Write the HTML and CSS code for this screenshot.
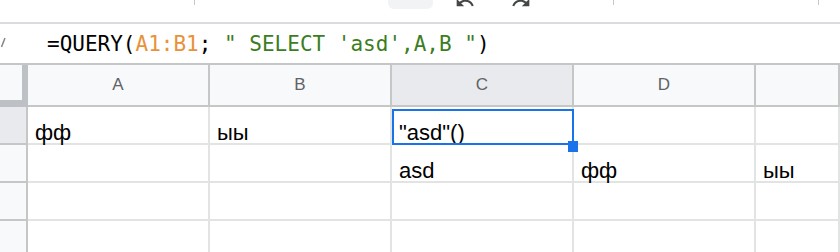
FILE: index.html
```html
<!DOCTYPE html>
<html lang="ru">

<head>
  <meta charset="UTF-8">
  <meta name="viewport" content="width=device-width, initial-scale=1.0">
  <title>Таблица</title>
  <link rel="stylesheet" href="styles.css">
</head>

<body>
  <div class="toolbar">
    <span class="sep sep-first"></span>
    <span class="pill"></span>
    <svg class="ico undo" viewBox="0 0 24 24"><path d="M12.5 8c-2.65 0-5.05.99-6.9 2.6L2 7v9h9l-3.62-3.62c1.39-1.16 3.16-1.88 5.12-1.88 3.54 0 6.55 2.31 7.6 5.5l2.37-.78C21.08 11.030 17.15 8 12.5 8z"/></svg>
    <svg class="ico redo" viewBox="0 0 24 24"><path d="M18.4 10.6C16.55 8.99 14.15 8 11.5 8c-4.65 0-8.58 3.03-9.96 7.22L3.9 16c1.05-3.19 4.05-5.5 7.6-5.5 1.95 0 3.73.72 5.12 1.880L13 16h9V7l-3.6 3.6z"/></svg>
    <span class="sep sep-second"></span>
    <span class="sep sep-third"></span>
  </div>

  <div class="formula-bar">
    <svg class="fx" viewBox="0 0 6 12"><path d="M5 2 L1.5 11" /></svg>
    <div class="formula">=QUERY(<span class="ref">A1:B1</span>; <span class="str">" SELECT 'asd',A,B "</span>)</div>
  </div>

  <div class="sheet">
    <div class="corner"></div>
    <div class="col-head">A</div>
    <div class="col-head">B</div>
    <div class="col-head active">C</div>
    <div class="col-head">D</div>
    <div class="col-head"></div>

    <div class="row-head active"></div>
    <div class="cell">фф</div>
    <div class="cell">ыы</div>
    <div class="cell">"asd"()</div>
    <div class="cell"></div>
    <div class="cell"></div>

    <div class="row-head"></div>
    <div class="cell"></div>
    <div class="cell"></div>
    <div class="cell">asd</div>
    <div class="cell">фф</div>
    <div class="cell">ыы</div>

    <div class="row-head"></div>
    <div class="cell"></div>
    <div class="cell"></div>
    <div class="cell"></div>
    <div class="cell"></div>
    <div class="cell"></div>

    <div class="row-head"></div>
    <div class="cell"></div>
    <div class="cell"></div>
    <div class="cell"></div>
    <div class="cell"></div>
    <div class="cell"></div>

    <div class="selection"><span class="handle"></span></div>
  </div>
</body>

</html>
```

FILE: styles.css
```css
body {
  margin: 0;
  width: 840px;
  height: 252px;
  overflow: hidden;
  background: #fff;
  font-family: "Liberation Sans", Arial, sans-serif;
}

/* верхняя панель, видна только нижняя часть */
.toolbar {
  display: flex;
  align-items: flex-start;
  height: 22px;
  border-bottom: 2px solid #dadce0;
  overflow: hidden;
}

.sep {
  width: 1px;
  height: 5px;
  background: #c7c7c7;
}

.sep-first {
  margin-left: 194px;
}

.pill {
  margin-left: 193px;
  width: 45px;
  height: 9px;
  background: #f1f3f4;
  border-radius: 0 0 6px 6px;
}

.ico {
  width: 20px;
  height: 20px;
  margin-top: -7px;
  fill: #444746;
  flex: none;
}

.undo {
  margin-left: 22px;
}

.redo {
  margin-left: 36px;
}

.sep-second {
  margin-left: 82px;
}

.sep-third {
  margin-left: 204px;
}

/* строка формул */
.formula-bar {
  display: flex;
  align-items: flex-start;
  height: 39px;
  border-bottom: 2px solid #c4c7c5;
}

.fx {
  width: 6px;
  height: 12px;
  margin-top: 12px;
  stroke: #80868b;
  stroke-width: 1.5;
  fill: none;
  flex: none;
}

.formula {
  margin-left: 41px;
  margin-top: 6px;
  font-family: "DejaVu Sans Mono", "Liberation Mono", monospace;
  font-size: 21px;
  line-height: 28px;
  color: #000;
  white-space: pre;
}

.ref {
  color: #e8923a;
}

.str {
  color: #3b7d23;
}

/* таблица */
.sheet {
  position: relative;
  display: grid;
  grid-template-columns: 28px repeat(4, 182px) 1fr;
  grid-template-rows: 42px repeat(4, 38px);
}

.corner {
  background: #f8f9fa;
  border-right: 6px solid #bdc1c6;
  border-bottom: 7px solid #bdc1c6;
}

.col-head {
  display: flex;
  align-items: center;
  justify-content: center;
  background: #f8f9fa;
  border-right: 2px solid #c4c7c5;
  border-bottom: 2px solid #c4c7c5;
  color: #5f6368;
  font-size: 17px;
}

.col-head.active {
  background: #e8eaed;
}

.row-head {
  background: #f8f9fa;
  border-right: 2px solid #c4c7c5;
  border-bottom: 2px solid #c4c7c5;
}

.row-head.active {
  background: #e8eaed;
}

.cell {
  display: flex;
  align-items: flex-end;
  padding-left: 7px;
  border-right: 2px solid #e2e3e3;
  border-bottom: 2px solid #e2e3e3;
  font-size: 22px;
  line-height: 20px;
  color: #000;
  white-space: nowrap;
}

.selection {
  position: absolute;
  left: 392px;
  top: 44px;
  width: 182px;
  height: 36px;
  box-sizing: border-box;
  border: 2px solid #1a73e8;
}

.handle {
  position: absolute;
  right: -6px;
  bottom: -9px;
  width: 10px;
  height: 11px;
  background: #1a73e8;
}
```
